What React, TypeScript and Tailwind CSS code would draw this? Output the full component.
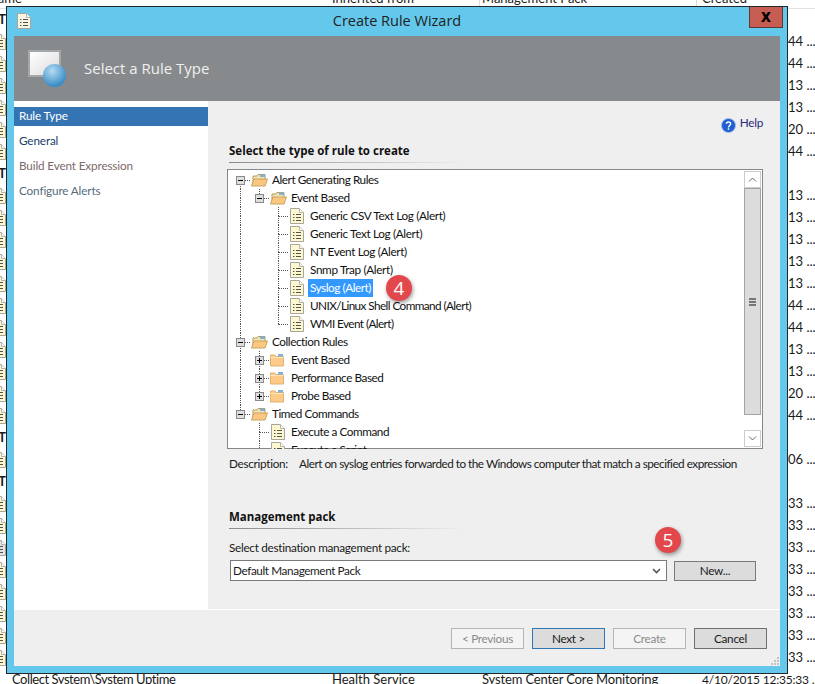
import type { ReactNode } from "react";

const backgroundRows: { left: "icon" | "grayicon" | "bold" | "none"; right: string }[] = [
  { left: "bold", right: "" },
  { left: "icon", right: "44 ..." },
  { left: "icon", right: "44 ..." },
  { left: "icon", right: "13 ..." },
  { left: "icon", right: "13 ..." },
  { left: "icon", right: "20 ..." },
  { left: "icon", right: "44 ..." },
  { left: "bold", right: "" },
  { left: "icon", right: "13 ..." },
  { left: "icon", right: "13 ..." },
  { left: "icon", right: "13 ..." },
  { left: "icon", right: "13 ..." },
  { left: "icon", right: "13 ..." },
  { left: "icon", right: "44 ..." },
  { left: "icon", right: "44 ..." },
  { left: "icon", right: "13 ..." },
  { left: "icon", right: "13 ..." },
  { left: "icon", right: "20 ..." },
  { left: "icon", right: "44 ..." },
  { left: "bold", right: "" },
  { left: "icon", right: "06 ..." },
  { left: "bold", right: "" },
  { left: "icon", right: "33 ..." },
  { left: "icon", right: "33 ..." },
  { left: "grayicon", right: "33 ..." },
  { left: "icon", right: "33 ..." },
  { left: "icon", right: "33 ..." },
  { left: "icon", right: "33 ..." },
  { left: "icon", right: "33 ..." },
  { left: "icon", right: "33 ..." },
];

function NoteIcon({ fill = "#fdf8cf" }: { fill?: string }) {
  return (
    <svg viewBox="0 0 14 18" className="h-[18px] w-[14px]">
      <path d="M0.5 1.5H9.5L13.5 5.5V16.5H0.5Z" fill={fill} stroke="#a8a59a" />
      <path d="M9.5 1.5V5.5H13.5" fill="#fff" stroke="#b5b3aa" />
      <path d="M3 7.5H4.5M6 7.5H11M3 10.5H4.5M6 10.5H11M3 13.5H4.5M6 13.5H11" stroke="#55544c" />
    </svg>
  );
}

function OpenFolder() {
  return (
    <svg viewBox="0 0 17 14" className="ml-px h-[14px] w-[17px]">
      <path d="M2 13V3H6L7 1.5H14V6" fill="#f3e4b4" stroke="#b89a5c" />
      <path d="M9 1.5H14V4H9Z" fill="#7fb2d6" />
      <path d="M0.5 13L3 6H16.5L14 13Z" fill="#fbc77e" stroke="#c6a368" />
    </svg>
  );
}

function ClosedFolder() {
  return (
    <svg viewBox="0 0 14 14" className="ml-px h-[14px] w-[14px]">
      <path d="M0.5 13V2H5L6 3.5H13.5V13Z" fill="#fdca87" stroke="#e3b26e" />
      <path d="M8 1H13V3.5H8Z" fill="#7fb2d6" />
      <path d="M0.5 4.5H13.5" stroke="#fbe6c2" />
    </svg>
  );
}

function Toggle({ open }: { open: boolean }) {
  return (
    <span className="relative z-10 flex h-[9px] w-[9px] items-center justify-center border border-[#8a8a8a] bg-[#dedede]">
      <span className="h-px w-[5px] bg-black" />
      {!open && <span className="absolute h-[5px] w-px bg-black" />}
    </span>
  );
}

// one 19px indent column of the tree, draws the dotted connector parts
function Cell({ down, up, across, children }: { down?: boolean; up?: boolean; across?: boolean; children?: ReactNode }) {
  return (
    <span className="relative flex h-[18px] w-[19px] shrink-0 items-center justify-center">
      {up && <span className="absolute left-[9px] top-0 h-[9px] border-l border-dotted border-[#555]" />}
      {down && <span className="absolute left-[9px] top-[9px] h-[9px] border-l border-dotted border-[#555]" />}
      {across && <span className="absolute left-[9px] top-[9px] w-[10px] border-t border-dotted border-[#555]" />}
      {children}
    </span>
  );
}

function Row({ children }: { children: ReactNode }) {
  return <div className="flex h-[18px] items-center whitespace-nowrap">{children}</div>;
}

function Note() {
  return (
    <span className="ml-[2px] mr-[6px]">
      <NoteIcon />
    </span>
  );
}

function Badge({ children }: { children: ReactNode }) {
  return (
    <span className="flex h-[26px] w-[26px] items-center justify-center rounded-full bg-[#e2474b] font-['Open_Sans',sans-serif] text-[19px] tracking-normal text-white shadow-[1px_2px_4px_rgba(0,0,0,0.4)]">
      {children}
    </span>
  );
}

function Tree() {
  return (
    <div className="h-[278px] w-[513px] overflow-hidden pl-[3px] tracking-[-0.45px] text-[#111]">
      <Row>
        <Cell down across><Toggle open /></Cell>
        <OpenFolder />
        <span className="ml-[4px]">Alert Generating Rules</span>
      </Row>
      <Row>
        <Cell up down />
        <Cell up across><Toggle open /></Cell>
        <OpenFolder />
        <span className="ml-[4px]">Event Based</span>
      </Row>
      {["Generic CSV Text Log (Alert)", "Generic Text Log (Alert)", "NT Event Log (Alert)", "Snmp Trap (Alert)"].map((name) => (
        <Row key={name}>
          <Cell up down />
          <Cell />
          <Cell up down across />
          <Note />
          <span className="tracking-[-0.35px]">{name}</span>
        </Row>
      ))}
      <Row>
        <Cell up down />
        <Cell />
        <Cell up down across />
        <Note />
        <span className="ml-[-2px] bg-[#3399ff] px-[2px] text-white">Syslog (Alert)</span>
        <span className="relative z-10 ml-[13px]"><Badge>4</Badge></span>
      </Row>
      <Row>
        <Cell up down />
        <Cell />
        <Cell up down across />
        <Note />
        <span className="tracking-[-0.58px]">UNIX/Linux Shell Command (Alert)</span>
      </Row>
      <Row>
        <Cell up down />
        <Cell />
        <Cell up across />
        <Note />
        <span className="tracking-[-0.58px]">WMI Event (Alert)</span>
      </Row>
      <Row>
        <Cell up down across><Toggle open /></Cell>
        <OpenFolder />
        <span className="ml-[4px]">Collection Rules</span>
      </Row>
      {["Event Based", "Performance Based", "Probe Based"].map((name, i) => (
        <Row key={name}>
          <Cell up down />
          <Cell up down={i < 2} across><Toggle open={false} /></Cell>
          <ClosedFolder />
          <span className="ml-[7px]">{name}</span>
        </Row>
      ))}
      <Row>
        <Cell up across><Toggle open /></Cell>
        <OpenFolder />
        <span className="ml-[4px]">Timed Commands</span>
      </Row>
      <Row>
        <Cell />
        <Cell up down across />
        <Note />
        <span>Execute a Command</span>
      </Row>
      <Row>
        <Cell />
        <Cell up down across />
        <Note />
        <span>Execute a Script</span>
      </Row>
    </div>
  );
}

function ScrollBar() {
  return (
    <div className="flex w-[17px] shrink-0 flex-col">
      <div className="flex h-[17px] items-center justify-center border border-[#ccc] bg-white">
        <svg viewBox="0 0 9 5" className="h-[5px] w-[9px]"><path d="M1 4.5L4.5 1L8 4.5" fill="none" stroke="#666" /></svg>
      </div>
      <div className="flex h-[227px] items-center justify-center border border-[#a3a3a3] bg-[#dcdcdc]">
        <div className="flex w-[7px] flex-col gap-px">
          <span className="h-[2px] bg-[#777]" />
          <span className="h-[2px] bg-[#777]" />
          <span className="h-[2px] bg-[#777]" />
        </div>
      </div>
      <div className="h-[15px]" />
      <div className="flex h-[17px] items-center justify-center border border-[#ccc] bg-white">
        <svg viewBox="0 0 9 5" className="h-[5px] w-[9px]"><path d="M1 0.5L4.5 4L8 0.5" fill="none" stroke="#666" /></svg>
      </div>
    </div>
  );
}

function SectionTitle({ children }: { children: ReactNode }) {
  return (
    <div>
      <div className="h-[18px] font-['Open_Sans',sans-serif] text-[11.5px] font-bold leading-[18px] tracking-normal text-[#111]">{children}</div>
      <div className="mt-[2px] h-px w-[236px] bg-gradient-to-r from-[#8a8a8a] to-[#efefef]" />
    </div>
  );
}

function WizardButton({ children, className }: { children: ReactNode; className: string }) {
  return (
    <button type="button" className={`flex h-[21px] w-[73px] items-center justify-center border ${className}`}>
      {children}
    </button>
  );
}

function Wizard() {
  return (
    <div className="absolute left-[6px] top-[6px] flex h-[668px] w-[782px] flex-col border border-[#23272b] bg-[#63c8eb] px-[7px] pb-[7px] tracking-[-0.3px]">
      <div className="relative flex h-[29px] shrink-0 items-center justify-center font-['Open_Sans',sans-serif] text-[14.5px] tracking-normal text-[#222]">
        <span className="absolute left-[3px] top-[5px]"><NoteIcon fill="#faf6e6" /></span>
        <span className="pb-[2px]">Create Rule Wizard</span>
        <button
          type="button"
          className="absolute right-[-3px] top-0 flex h-[21px] w-[34px] items-center justify-center border border-t-0 border-[#5a3a38] bg-[#c65c52] pb-[3px] text-[17px] font-bold leading-none text-black"
        >
          x
        </button>
      </div>
      <div className="flex h-[65px] shrink-0 items-center bg-[#868a8d] pl-[14px]">
        <div className="relative h-[37px] w-[38px]">
          <div className="h-[27px] w-[33px] border-2 border-[#a5a7a9] bg-gradient-to-br from-white to-[#dcdcdc]" />
          <div className="absolute left-[15px] top-[14px] h-[23px] w-[23px] rounded-full bg-[radial-gradient(circle_at_40%_30%,#b6dcf2,#3e8fc9_70%,#2c74a8)]" />
        </div>
        <span className="ml-[18px] font-['Open_Sans',sans-serif] text-[15px] tracking-normal text-[#f0f0f0]">Select a Rule Type</span>
      </div>
      <div className="flex h-[509px] shrink-0 bg-[#efefef]">
        <div className="w-[194px] shrink-0 bg-white pt-[6px] leading-[18px] tracking-[-0.15px]">
          <div className="h-[19px] bg-[#3574b3] pl-[5px] text-white">Rule Type</div>
          <div className="mt-[6px] h-[19px] pl-[5px] text-[#1c3c6e]">General</div>
          <div className="mt-[6px] h-[19px] pl-[5px] text-[#7c6a6a]">Build Event Expression</div>
          <div className="mt-[6px] h-[19px] pl-[5px] text-[#566b7c]">Configure Alerts</div>
        </div>
        <div className="flex min-w-0 flex-1 flex-col border-b border-white pl-[21px]">
          <div className="flex h-[33px] items-end justify-end pb-[2px] pr-[17px]">
            <svg viewBox="0 0 16 16" className="mb-[-1px] mr-[4px] h-[15px] w-[15px]">
              <circle cx="8" cy="8" r="7.5" fill="#1f5fd0" stroke="#a9c2ea" />
              <path d="M5.7 6.2C5.8 3.6 10.3 3.6 10.3 6.2C10.3 8 8 8 8 10" fill="none" stroke="#fff" strokeWidth="1.5" />
              <rect x="7.2" y="11" width="1.6" height="1.6" fill="#fff" />
            </svg>
            <span className="text-[#2a2a7a]">Help</span>
          </div>
          <div className="mt-[8px]"><SectionTitle>Select the type of rule to create</SectionTitle></div>
          <div className="ml-[-2px] mt-[6px] flex h-[280px] w-[536px] items-start border border-[#84888c] bg-white pt-px">
            <Tree />
            <div className="ml-[3px]"><ScrollBar /></div>
          </div>
          <div className="mt-[6px] flex h-[18px] items-center whitespace-nowrap leading-[18px]">
            <span className="w-[70px]">Description:</span>
            <span className="tracking-[-0.5px]">Alert on syslog entries forwarded to the Windows computer that match a specified expression</span>
          </div>
          <div className="mt-[35px]"><SectionTitle>Management pack</SectionTitle></div>
          <div className="mt-[10px] h-[18px] leading-[18px]">Select destination management pack:</div>
          <div className="relative mt-[3px] flex h-[21px] items-center">
            <div className="ml-px flex h-[21px] w-[437px] items-center justify-between border border-[#7a7a7a] bg-white pl-[2px] pr-[5px]">
              <span className="tracking-[-0.4px]">Default Management Pack</span>
              <svg viewBox="0 0 9 6" className="h-[6px] w-[9px]"><path d="M1 1L4.5 4.5L8 1" fill="none" stroke="#555" strokeWidth="1.6" /></svg>
            </div>
            <button type="button" className="ml-[7px] h-[20px] w-[82px] border border-[#7a7a7a] bg-[#dcdcdc]">New...</button>
            <span className="absolute left-[426px] top-[-33px]"><Badge>5</Badge></span>
          </div>
        </div>
      </div>
      <div className="relative flex flex-1 items-start justify-end gap-[8px] bg-[#efefef] pr-[13px] pt-[18px]">
        <WizardButton className="border-[#b5b5b5] bg-[#f4f4f4] text-[#8a8a8a]">&lt; Previous</WizardButton>
        <WizardButton className="border-[#2f78b8] bg-[#dcdcdc]">Next &gt;</WizardButton>
        <WizardButton className="border-[#b5b5b5] bg-[#f4f4f4] text-[#8a8a8a]">Create</WizardButton>
        <WizardButton className="border-[#707070] bg-[#dcdcdc]">Cancel</WizardButton>
        <svg viewBox="0 0 9 9" className="absolute bottom-[1px] right-[1px] h-[9px] w-[9px]">
          <path d="M7 1h2v2H7zM4 4h2v2H4zM7 4h2v2H7zM1 7h2v2H1zM4 7h2v2H4zM7 7h2v2H7z" fill="#c4c4c4" />
        </svg>
      </div>
    </div>
  );
}

export default function App() {
  return (
    <div className="relative h-[684px] w-[815px] overflow-hidden bg-white font-[Lato,sans-serif] text-[11.75px] text-[#1a1a1a]">
      <div className="mt-[-11px] flex h-[18px] text-[13px] leading-[18px]">
        <span className="ml-[-12px] w-[344px] shrink-0">Name</span>
        <span className="w-[148px] shrink-0 border-r border-[#ddd]">Inherited from</span>
        <span className="w-[217px] shrink-0 border-r border-[#ddd] pl-[2px]">Management Pack</span>
        <span className="pl-[5px]">Created</span>
      </div>
      <div className="mt-px h-px bg-[#e2e2e2]" />
      <div>
        {backgroundRows.map((row, i) => (
          <div key={i} className="flex h-[22px] items-center justify-between text-[13px]">
            <span className="ml-[-8px] flex w-[14px] justify-end">
              {row.left === "bold" && <span className="font-bold">T</span>}
              {row.left === "icon" && <NoteIcon />}
              {row.left === "grayicon" && <NoteIcon fill="#e4e4e4" />}
            </span>
            <span className="w-[27px] whitespace-nowrap">{row.right}</span>
          </div>
        ))}
      </div>
      <div className="flex h-[22px] items-center whitespace-nowrap pl-[12px] text-[13px]">
        <span className="w-[320px] shrink-0 tracking-[-0.45px]">Collect System\System Uptime</span>
        <span className="w-[150px] shrink-0">Health Service</span>
        <span className="w-[220px] shrink-0 tracking-[-0.15px]">System Center Core Monitoring</span>
        <span className="text-[12px] tracking-[-0.2px]">4/10/2015 12:35:33 ...</span>
      </div>
      <Wizard />
    </div>
  );
}
